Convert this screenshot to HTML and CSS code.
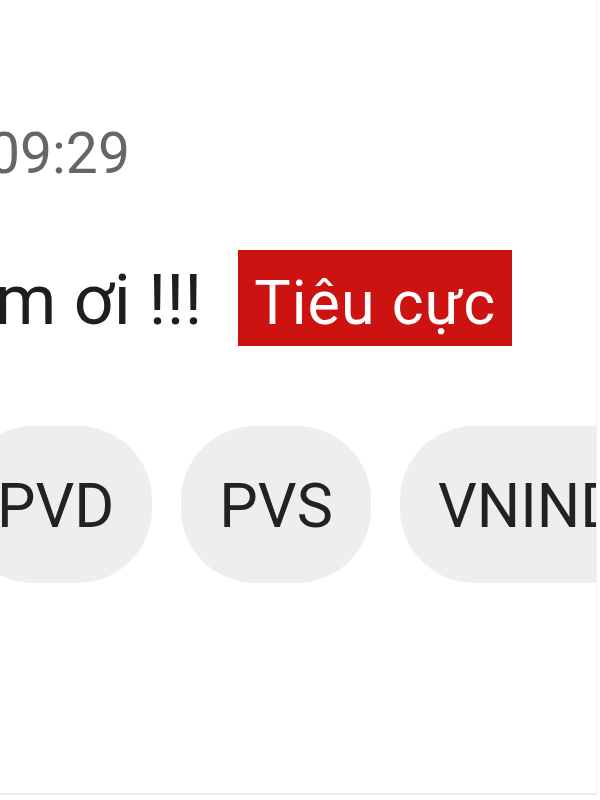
FILE: index.html
```html
<!DOCTYPE html>
<html lang="vi">
<head>
    <meta charset="UTF-8">
    <meta name="viewport" content="width=device-width, initial-scale=1.0">
    <title>Tin nhắn</title>
    <link rel="stylesheet" href="styles.css">
</head>
<body>
    <div class="card">
        <div class="time">09:29</div>
        <div class="message">
            <span class="text">m ơi !!!</span>
            <span class="badge negative">Tiêu cực</span>
        </div>
        <div class="tags">
            <span class="tag">PVD</span>
            <span class="tag">PVS</span>
            <span class="tag">VNINDEX</span>
        </div>
    </div>
</body>
</html>
```

FILE: styles.css
```css
html, body {
    margin: 0;
    padding: 0;
    background: #fff;
}
body {
    width: 600px;
    height: 800px;
    overflow: hidden;
    font-family: Roboto, "Noto Sans", Arial, sans-serif;
}
.card {
    width: 596px;
    height: 793px;
    overflow: hidden;
    border-right: 1px solid #f1f1f1;
    border-bottom: 2px solid #ececec;
}
.time {
    margin: 120px 0 0 -12px;
    font-size: 57px;
    line-height: 68px;
    color: #666;
}
.message {
    display: flex;
    align-items: baseline;
    gap: 36px;
    margin: 62px 0 0 -5px;
    white-space: nowrap;
}
.text {
    font-size: 70px;
    line-height: 82px;
    color: #1e1e1e;
}
.badge {
    font-size: 61px;
    line-height: 71px;
    letter-spacing: 1px;
    padding: 18px 16px 7px 16px;
    color: #fff;
}
.negative {
    background: #cd1212;
}
.tags {
    display: flex;
    gap: 29px;
    margin: 80px 0 0 -41px;
}
.tag {
    flex-shrink: 0;
    white-space: nowrap;
    font-size: 61px;
    line-height: 71px;
    padding: 45px 38px 41px;
    border-radius: 74px;
    background: #eeeeee;
    color: #222;
}
```
